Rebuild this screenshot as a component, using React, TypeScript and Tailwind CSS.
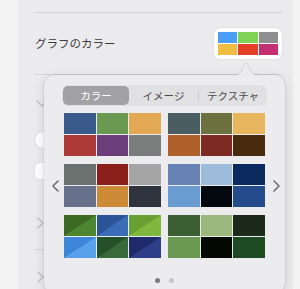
import React from "react";

type Cell = string | [string, string];

const groups: Cell[][] = [
  ["#3a5a8c", "#6a9a52", "#e2a853", "#ae3a38", "#6b3e79", "#7b7d7c"],
  ["#4a5d61", "#6b713f", "#e8b55f", "#b0602a", "#7e2b23", "#4a2a0e"],
  ["#6b716e", "#8b1f19", "#a5a5a5", "#68718b", "#cc8a37", "#2f333e"],
  ["#6683b3", "#9dbcdc", "#0d2a5f", "#6a9bd1", "#03080f", "#244b8c"],
  [
    ["#3c6a22", "#4d8531"],
    ["#2a5699", "#3a6db6"],
    ["#68a033", "#80b83f"],
    ["#3e86d8", "#5aa1ec"],
    ["#24502a", "#38693a"],
    ["#1f2b6a", "#2f3e88"],
  ],
  ["#3b5f33", "#9bb97d", "#1b2a19", "#6a9a52", "#030803", "#1d4a21"],
];

function Swatch({ c }: { c: Cell }) {
  if (typeof c === "string") {
    return <div className="h-[21px]" style={{ backgroundColor: c }} />;
  }
  return (
    <div
      className="h-[21px]"
      style={{ background: `linear-gradient(to bottom right, ${c[0]} 50%, ${c[1]} 50%)` }}
    />
  );
}

function Chevron({ dir, className }: { dir: "left" | "right" | "down"; className?: string }) {
  const d =
    dir === "left" ? "M6 1 L1 6 L6 11" : dir === "right" ? "M1 1 L6 6 L1 11" : "M1 1 L6 6 L11 1";
  const w = dir === "down" ? 12 : 7;
  const h = dir === "down" ? 7 : 12;
  return (
    <svg width={w} height={h} viewBox={`0 0 ${w} ${h}`} className={className}>
      <path d={d} fill="none" stroke="currentColor" strokeWidth="1.6" strokeLinecap="round" strokeLinejoin="round" />
    </svg>
  );
}

export default function App() {
  return (
    <div
      className="relative flex h-[289px] w-[300px] overflow-hidden bg-[#f3f3f4]"
      style={{ fontFamily: '"Noto Sans CJK JP", "Noto Sans", sans-serif' }}
    >
      <div className="w-[18px] shrink-0" />
      <div className="flex w-[275px] shrink-0 flex-col bg-[#ebebed] pl-[17px] pr-[10px]">
        <div className="mt-[12px] h-px bg-[#d6d6d8]" />
        <div className="flex h-[61px] items-center justify-between">
          <span className="text-[11.5px] text-[#3b3b3d]">グラフのカラー</span>
          <div className="mr-px rounded-[6px] bg-white px-[4px] py-[4px] shadow-[0_0_2px_rgba(0,0,0,0.12)]">
            <div className="grid grid-cols-3 gap-px">
              {["#4a9ff5", "#7fd457", "#8f8f8f", "#f0bd43", "#e63f28", "#c42f72"].map((c) => (
                <div key={c} className="h-[11px] w-[19.5px]" style={{ backgroundColor: c }} />
              ))}
            </div>
          </div>
        </div>
        <div className="h-px bg-[#d6d6d8]" />
        <div className="flex h-[57px] items-center pl-px text-[#c4c4c6]">
          <Chevron dir="down" />
        </div>
        <div className="h-[16px] w-[16px] rounded-full bg-white shadow-[0_0_1px_rgba(0,0,0,0.3)]" />
        <div className="mt-[15px] h-[16px] w-[16px] rounded-[4px] bg-white shadow-[0_0_1px_rgba(0,0,0,0.3)]" />
        <div className="mt-[38px] flex pl-[2px] text-[#c4c4c6]">
          <Chevron dir="right" />
        </div>
        <div className="mt-[20px] h-px bg-[#d6d6d8]" />
        <div className="mt-[21px] flex pl-[2px] text-[#c4c4c6]">
          <Chevron dir="right" />
        </div>
      </div>
      <div className="flex-1" />

      {/* popover */}
      <div className="absolute left-[44px] top-[75px] h-[218px] w-[241px] rounded-[10px] bg-[#ececee] shadow-[0_0_0_0.5px_rgba(0,0,0,0.12),0_3px_12px_rgba(0,0,0,0.12)]">
        <svg
          width="30"
          height="14"
          viewBox="0 0 30 14"
          className="absolute left-[187px] top-[-13px]"
        >
          <path
            d="M0 13.5 C6 13.5 8 12 10 9.5 L13.5 2 C14.3 0.7 15.7 0.7 16.5 2 L20 9.5 C22 12 24 13.5 30 13.5"
            fill="#ececee"
            stroke="rgba(0,0,0,0.12)"
            strokeWidth="0.75"
          />
          <rect x="0" y="13.4" width="30" height="1" fill="#ececee" />
        </svg>

        <div className="mx-[18px] mt-[10px] flex h-[21px] items-center rounded-[6px] bg-[#e1e1e3] text-[10.5px] text-[#4a4a4c]">
          <div className="ml-px flex h-[19px] w-[66px] items-center justify-center rounded-[5px] bg-[#a2a2a4] text-white">
            カラー
          </div>
          <div className="flex w-[69px] items-center justify-center">イメージ</div>
          <div className="h-[10px] w-px bg-[#c8c8ca]" />
          <div className="flex flex-1 items-center justify-center">テクスチャ</div>
        </div>

        <div className="relative mt-[7px] flex items-center">
          <div className="flex w-[20px] justify-center pl-[2px] text-[#6e6e70]">
            <Chevron dir="left" />
          </div>
          <div className="grid grid-cols-[97px_97px] gap-x-[7px] gap-y-[8px]">
            {groups.map((g, i) => (
              <div key={i} className="grid grid-cols-3 gap-px">
                {g.map((c, j) => (
                  <Swatch key={j} c={c} />
                ))}
              </div>
            ))}
          </div>
          <div className="flex flex-1 justify-center pl-[2px] text-[#6e6e70]">
            <Chevron dir="right" />
          </div>
        </div>

        <div className="mt-[20px] flex justify-center gap-[9px]">
          <div className="h-[5px] w-[5px] rounded-full bg-[#7a7a7c]" />
          <div className="h-[5px] w-[5px] rounded-full bg-[#c6c6c8]" />
        </div>
      </div>
    </div>
  );
}
